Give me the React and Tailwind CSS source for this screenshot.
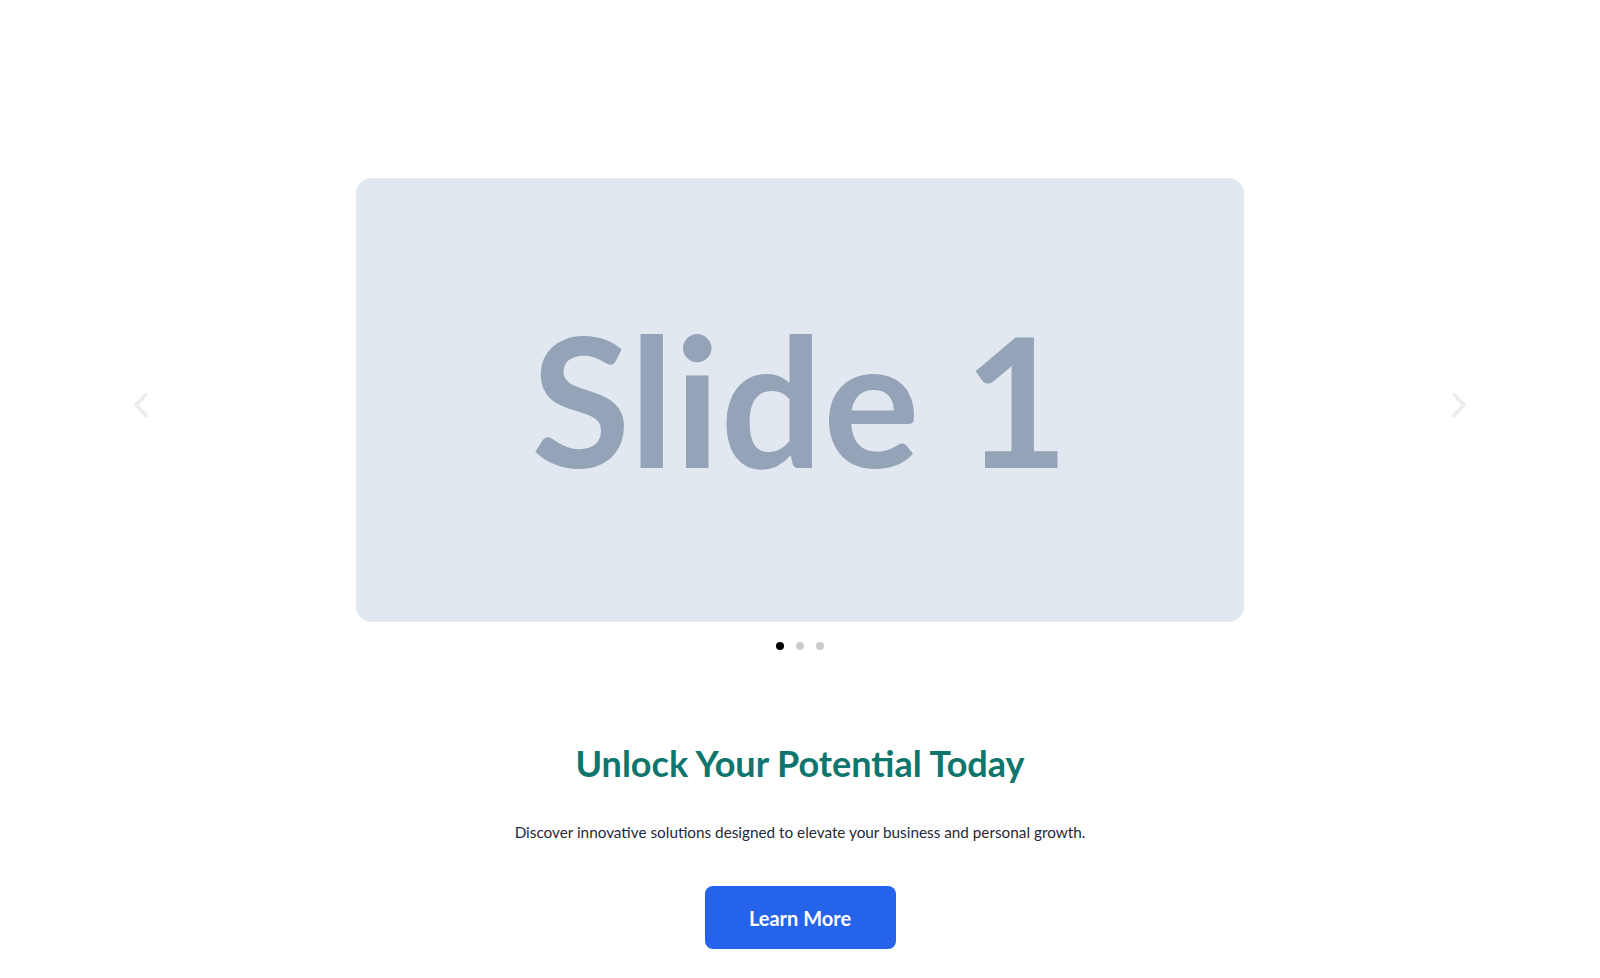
import React from "react";

function Chevron({ dir }) {
  return (
    <svg width="16" height="26" viewBox="0 0 16 26" fill="none">
      {dir === "left" ? (
        <path d="M13 2.5 L3 13 L13 23.5" stroke="#ececec" strokeWidth="3.6" strokeLinecap="round" strokeLinejoin="round" />
      ) : (
        <path d="M3 2.5 L13 13 L3 23.5" stroke="#ececec" strokeWidth="3.6" strokeLinecap="round" strokeLinejoin="round" />
      )}
    </svg>
  );
}

export default function App() {
  return (
    <div className="min-h-[978px] w-full bg-white flex flex-col items-center pt-[178px]" style={{ fontFamily: "Lato, 'Noto Sans', sans-serif" }}>
      <div className="w-[1342px] flex items-center justify-between">
        <button className="w-[24px] h-[40px] mt-[10px] flex items-center justify-center">
          <Chevron dir="left" />
        </button>
        <div className="w-[888px] h-[444px] rounded-2xl bg-[#e2e8f0] flex items-center justify-center">
          <span className="text-[181px] font-bold leading-none text-[#94a3b8] -mt-[4px]">Slide 1</span>
        </div>
        <button className="w-[24px] h-[40px] mt-[10px] flex items-center justify-center">
          <Chevron dir="right" />
        </button>
      </div>
      <div className="mt-5 flex items-center gap-3">
        <span className="w-2 h-2 rounded-full bg-black"></span>
        <span className="w-2 h-2 rounded-full bg-[#cccccc]"></span>
        <span className="w-2 h-2 rounded-full bg-[#cccccc]"></span>
      </div>
      <h1 className="mt-[89px] text-[36px] leading-[48px] font-bold text-[#0f766e]">Unlock Your Potential Today</h1>
      <p className="mt-[33px] text-[15.3px] leading-6 text-[#1e293b]">Discover innovative solutions designed to elevate your business and personal growth.</p>
      <button className="mt-[42px] w-[191px] h-[63px] rounded-lg bg-[#2563eb] text-white text-xl font-bold">Learn More</button>
    </div>
  );
}
